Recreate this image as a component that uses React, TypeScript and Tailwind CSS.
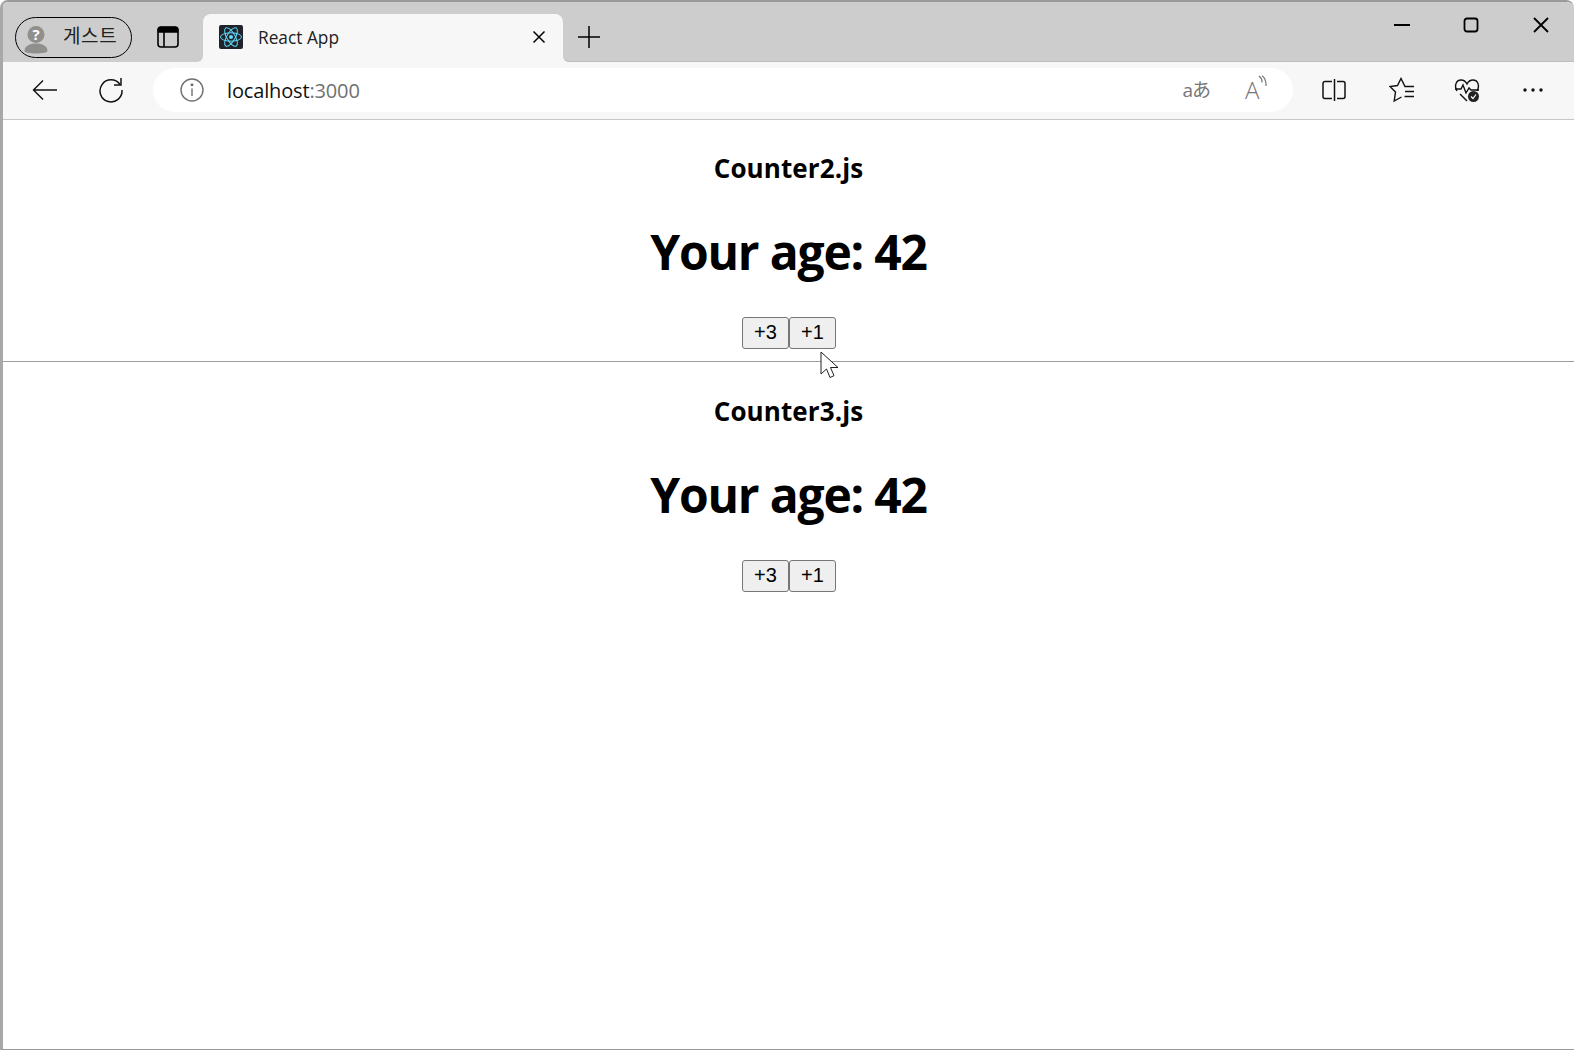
const FONT = "font-['Open_Sans','Noto_Sans_CJK_KR',sans-serif]";

function ReactIcon() {
  return (
    <svg width="24" height="24" viewBox="0 0 24 24" className="rounded-[2px]">
      <rect width="24" height="24" fill="#20232a" />
      <g fill="none" stroke="#61dafb" strokeWidth="1">
        <ellipse cx="12" cy="12" rx="10.5" ry="4.2" />
        <ellipse cx="12" cy="12" rx="10.5" ry="4.2" transform="rotate(60 12 12)" />
        <ellipse cx="12" cy="12" rx="10.5" ry="4.2" transform="rotate(120 12 12)" />
      </g>
      <circle cx="12" cy="12" r="2" fill="#61dafb" />
    </svg>
  );
}

function GuestAvatar() {
  return (
    <svg width="24" height="36" viewBox="0 -8 24 36" className="-mt-[3px]">
      <circle cx="12" cy="8.500" r="8.500" fill="#8f8f8c" />
      <text x="12" y="14" textAnchor="middle" fontSize="15" fontWeight="700" fill="#ffffff" fontFamily="Open Sans, sans-serif">?</text>
      <path d="M0.500 25c0-5 5-7.500 11.500-7.500s11.500 2.500 11.500 7.500c0 1.500-5 2.500-11.500 2.500S0.500 26.500 0.500 25z" fill="#8f8f8c" />
    </svg>
  );
}

function ToolButton({ children }: { children: React.ReactNode }) {
  return <div className="flex h-full w-[66px] shrink-0 items-center justify-center">{children}</div>;
}

function Counter({ name }: { name: string }) {
  return (
    <section className="flex flex-col items-center pt-[32px] text-black">
      <h2 className="h-[32px] text-[26px] leading-[32px] font-bold tracking-[0.1px]">{name}</h2>
      <h1 className="mt-[36px] h-[64px] text-[48px] leading-[64px] font-bold tracking-[-1.2px]">Your age: 42</h1>
      <div className="mt-[33px] flex">
        <button type="button" className="h-[32px] w-[47px] rounded-[3px] border border-[#767676] bg-[#efefef] pb-[2px] pl-[1px] font-['Liberation_Sans',sans-serif] text-[20px] leading-none text-black">+3</button>
        <button type="button" className="h-[32px] w-[47px] rounded-[3px] border border-[#767676] bg-[#efefef] pb-[2px] pl-[1px] font-['Liberation_Sans',sans-serif] text-[20px] leading-none text-black">+1</button>
      </div>
    </section>
  );
}

export default function App() {
  return (
    <div className={`relative flex h-[1050px] w-[1574px] flex-col overflow-hidden rounded-t-[8px] border-t-2 border-b border-l-[3px] border-t-[#9a9a9a] border-b-[#9a9a9a] border-l-[#a8a8a8] bg-white ${FONT}`}>
      {/* tab strip */}
      <div className="flex h-[60px] shrink-0 bg-[#f7f7f7]">
        <div className="flex w-[200px] shrink-0 items-start rounded-br-[6px] bg-[#cdcdcd] pt-[15px] pl-[12px]">
          <div className="flex h-[41px] w-[117px] items-center rounded-full border-[1.5px] border-black pl-[8px]">
            <GuestAvatar />
            <span className="ml-[15px] pb-[3px] text-[19px] leading-none tracking-[0.6px] text-[#222]">게스트</span>
          </div>
          <svg width="22" height="22" viewBox="0 0 22 22" className="mt-[9px] ml-[25px]" fill="none" stroke="#000" strokeWidth="1.6">
            <rect x="1" y="1" width="20" height="20" rx="3" />
            <path d="M1.500 3.500a2 2 0 0 1 2-2h15a2 2 0 0 1 2 2V6h-19z" fill="#000" />
            <path d="M7 6v15" />
          </svg>
        </div>
        <div className="w-[360px] shrink-0 bg-[#cdcdcd]">
          <div className="mt-[12px] flex h-[48px] items-center rounded-t-[8px] bg-[#f7f7f7] pb-[2px] pl-[16px]">
            <ReactIcon />
            <span className="ml-[15px] pt-[2px] text-[17.3px] leading-none text-[#222]">React App</span>
            <svg width="14" height="14" viewBox="0 0 14 14" className="mr-[17px] ml-auto" stroke="#000" strokeWidth="1.5">
              <path d="M1.500 1.500l11 11M12.500 1.500l-11 11" />
            </svg>
          </div>
        </div>
        <div className="flex flex-1 items-start rounded-bl-[6px] border-b border-[#bdbdbd] bg-[#cdcdcd]">
          <svg width="22" height="22" viewBox="0 0 22 22" className="mt-[24px] ml-[15px]" stroke="#000" strokeWidth="1.5">
            <path d="M11 0v22M0 11h22" />
          </svg>
          <div className="ml-auto flex h-[48px] items-center pb-[2px]">
            <div className="flex w-[64px] justify-center">
              <svg width="16" height="16" viewBox="0 0 16 16" stroke="#000" strokeWidth="1.8"><path d="M0 8h16" /></svg>
            </div>
            <div className="flex w-[74px] justify-center">
              <svg width="16" height="16" viewBox="0 0 16 16" fill="none" stroke="#000" strokeWidth="1.8"><rect x="1.500" y="1.500" width="13" height="13" rx="2.500" /></svg>
            </div>
            <div className="flex w-[66px] justify-center">
              <svg width="16" height="16" viewBox="0 0 16 16" stroke="#000" strokeWidth="1.8"><path d="M1 1l14 14M15 1L1 15" /></svg>
            </div>
          </div>
        </div>
      </div>

      {/* toolbar */}
      <div className="flex h-[58px] shrink-0 items-center border-b border-[#c6c6c6] bg-[#f7f7f7] pb-[1px] pl-[9px]">
        <ToolButton>
          <svg width="26" height="22" viewBox="0 0 26 22" fill="none" stroke="#111" strokeWidth="1.4">
            <path d="M25 11H1.500M11 1.500L1.500 11l9.500 9.500" />
          </svg>
        </ToolButton>
        <ToolButton>
          <svg width="26" height="26" viewBox="0 0 26 26" fill="none" stroke="#111" strokeWidth="1.5">
            <path d="M22 7.500A11 11 0 1 0 24 13" />
            <path d="M23 1v7h-7" />
          </svg>
        </ToolButton>
        <div className="ml-[9px] flex h-[44px] w-[1140px] shrink-0 items-center rounded-full bg-white pl-[27px]">
          <svg width="24" height="24" viewBox="0 0 24 24" fill="none" stroke="#707070" strokeWidth="1.4">
            <circle cx="12" cy="12" r="11" />
            <path d="M12 10.500v7.500" />
            <circle cx="12" cy="6.800" r="0.800" fill="#707070" />
          </svg>
          <span className="ml-[23px] pt-[2px] text-[20px] leading-none tracking-[-0.15px] text-[#111]">
            localhost<span className="text-[#707070]">:3000</span>
          </span>
          <div className="ml-auto flex items-center pr-[22px]">
            <span className="text-[19px] leading-none tracking-[-1px] text-[#777]">aあ</span>
            <span className="relative ml-[35px] flex w-[26px] items-center">
              <span className="text-[24px] leading-none font-light text-[#777]">A</span>
              <svg width="9" height="13" viewBox="0 0 10 14" fill="none" stroke="#777" strokeWidth="1.400" className="absolute top-[-3px] right-[4px]">
                <path d="M1 1c2.500 1.500 3.500 4 3.500 7M4.500 0.500C7.500 2.500 9 6 9 12" />
              </svg>
            </span>
          </div>
        </div>
        <div className="ml-[8px] flex h-full">
          <ToolButton>
            <svg width="24" height="24" viewBox="0 0 24 24" fill="none" stroke="#111" strokeWidth="1.5">
              <path d="M10 3.500H3a2 2 0 0 0-2 2v13a2 2 0 0 0 2 2h7M15 3.500h6a2 2 0 0 1 2 2v13a2 2 0 0 1-2 2h-6M12.500 1v22" />
            </svg>
          </ToolButton>
          <ToolButton>
            <svg width="26" height="26" viewBox="0 0 26 26" fill="none" stroke="#111" strokeWidth="1.4" className="ml-[3px]">
              <path d="M25 9.500H16L12 1.500 8.500 8.500 1 9.500l5.500 5.500-1.300 9 7.300-4" />
              <path d="M16 14.500h9M15.500 19.500h9.500" />
            </svg>
          </ToolButton>
          <ToolButton>
            <svg width="26" height="26" viewBox="0 0 26 26" fill="none" stroke="#111" strokeWidth="1.4" className="ml-[2px]">
              <path d="M3 14C0 9 2 3 7 3c3 0 5 2 6 4 1-2 3-4 6-4 5 0 7 6 4 11" />
              <path d="M1 12h6l2-4 3 8 3-5 2 2h8" />
              <path d="M6 17l7 7" />
              <circle cx="19.500" cy="19.500" r="5.500" fill="#222" stroke="none" />
              <path d="M17 19.500l2 2 3-4" stroke="#fff" strokeWidth="1.200" />
            </svg>
          </ToolButton>
          <ToolButton>
            <svg width="22" height="6" viewBox="0 0 22 6" fill="#111" className="ml-[2px]">
              <circle cx="3" cy="3" r="1.700" />
              <circle cx="11" cy="3" r="1.700" />
              <circle cx="19" cy="3" r="1.700" />
            </svg>
          </ToolButton>
        </div>
      </div>

      {/* page content */}
      <Counter name="Counter2.js" />
      <hr className="mt-[12px] mb-[1px] border-t border-[#9c9c9c]" />
      <Counter name="Counter3.js" />

      <svg width="20" height="28" viewBox="0 0 20 28" className="absolute top-[349px] left-[817px]" fill="#fff" stroke="#222" strokeWidth="1">
        <path d="M1 1v22l5.500-5 3.500 8.500 4-1.800-3.500-8.200H18z" />
      </svg>
    </div>
  );
}
